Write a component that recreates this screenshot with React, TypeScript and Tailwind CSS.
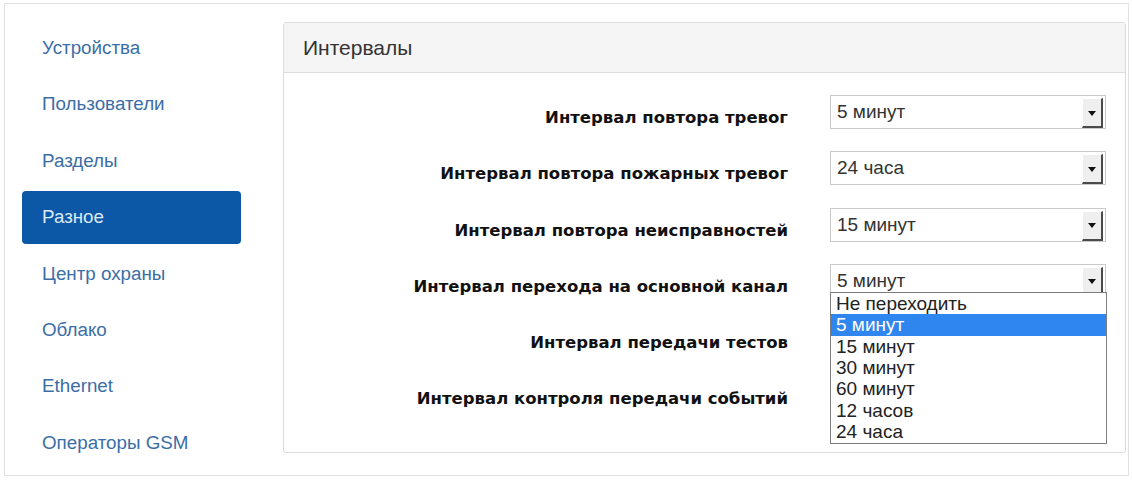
import React from "react";

const navItems = [
  "Устройства",
  "Пользователи",
  "Разделы",
  "Разное",
  "Центр охраны",
  "Облако",
  "Ethernet",
  "Операторы GSM",
];

const rows = [
  { label: "Интервал повтора тревог", value: "5 минут" },
  { label: "Интервал повтора пожарных тревог", value: "24 часа" },
  { label: "Интервал повтора неисправностей", value: "15 минут" },
  { label: "Интервал перехода на основной канал", value: "5 минут", open: true },
  { label: "Интервал передачи тестов", value: "" },
  { label: "Интервал контроля передачи событий", value: "" },
];

const options = [
  "Не переходить",
  "5 минут",
  "15 минут",
  "30 минут",
  "60 минут",
  "12 часов",
  "24 часа",
];

function ArrowButton({ open }: { open?: boolean }) {
  return (
    <div
      className={
        "absolute right-[2px] top-[2px] w-[21px] flex items-center justify-center bg-[#efefef] border-l border-t border-l-white border-t-white border-r-2 border-r-[#4a4a4a] " +
        (open ? "h-[28px]" : "h-[30px] border-b-2 border-b-[#4a4a4a]")
      }
    >
      <svg width="8" height="5" viewBox="0 0 8 5" className="mt-[1px]">
        <polygon points="0,0 8,0 4,5" fill="#111" />
      </svg>
    </div>
  );
}

function Select({ value, open }: { value: string; open?: boolean }) {
  return (
    <div className="relative w-[276px] h-[34px] border border-[#c9c9c9] bg-white">
      <div
        className="pl-[6px] text-[19px] leading-[32px] text-[#333]"
        style={{ fontFamily: '"Liberation Sans", Arial, sans-serif' }}
      >
        {value}
      </div>
      {value !== "" && <ArrowButton open={open} />}
      {open && (
        <div
          className="absolute left-[-1px] top-[27px] w-[277px] border border-[#7d7d7d] bg-white z-10"
          style={{ fontFamily: '"Liberation Sans", Arial, sans-serif' }}
        >
          {options.map((o, i) => (
            <div
              key={o}
              className={
                "h-[21.4px] pl-[5px] text-[19px] leading-[21.4px] " +
                (i === 1 ? "bg-[#2f86ee] text-white" : "text-[#222]")
              }
            >
              {o}
            </div>
          ))}
        </div>
      )}
    </div>
  );
}

export default function App() {
  return (
    <div className="w-[1132px] h-[481px] bg-white overflow-hidden">
      <div className="ml-[4px] mt-[3px] w-[1125px] h-[473px] border border-[#e2e2e2] flex">
        {/* Sidebar */}
        <div className="w-[278px] pl-[17px] pt-[17.5px] flex flex-col gap-[3.43px] shrink-0">
          {navItems.map((item) => {
            const active = item === "Разное";
            return (
              <div
                key={item}
                className={
                  "w-[219px] h-[53px] pl-[20px] flex items-center rounded-[4px] text-[18.8px] " +
                  (active ? "bg-[#0c58a6] text-[#dce9f7]" : "text-[#3b6ea6]")
                }
                style={{ fontFamily: '"Liberation Sans", Arial, sans-serif' }}
              >
                {item}
              </div>
            );
          })}
        </div>

        {/* Panel */}
        <div className="mt-[18px] w-[843px] h-[431px] border border-[#dcdcdc] rounded-[3px] flex flex-col">
          <div
            className="h-[50px] bg-[#f5f5f5] border-b border-[#dcdcdc] pl-[19px] flex items-center text-[21px] text-[#333]"
            style={{ fontFamily: '"Liberation Sans", Arial, sans-serif' }}
          >
            Интервалы
          </div>
          <div className="pt-[22px] flex flex-col">
            {rows.map((r) => (
              <div key={r.label} className="h-[56.3px] flex items-start">
                <div
                  className="w-[504px] mt-[13px] text-right font-bold text-[16.5px] leading-[20px] text-[#111]"
                  style={{ fontFamily: '"DejaVu Sans", Verdana, sans-serif' }}
                >
                  {r.label}
                </div>
                <div className="ml-[42px]">
                  <Select value={r.value} open={r.open} />
                </div>
              </div>
            ))}
          </div>
        </div>
      </div>
    </div>
  );
}
